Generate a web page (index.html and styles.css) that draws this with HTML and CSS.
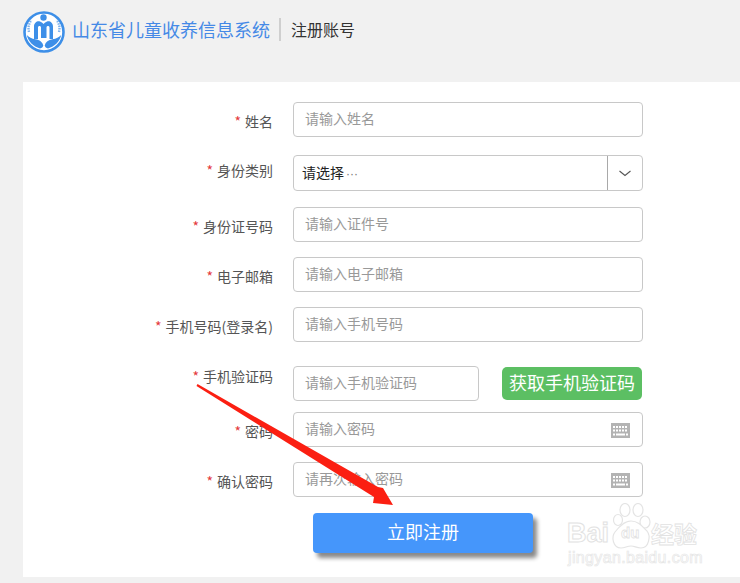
FILE: index.html
```html
<!DOCTYPE html>
<html lang="zh-CN">
<head>
<meta charset="utf-8">
<title>注册账号</title>
<link rel="stylesheet" href="styles.css">
</head>
<body>
<header class="top">
  <svg class="logo" width="42" height="42" viewBox="0 0 42 42" aria-hidden="true">
    <circle cx="21" cy="21" r="19.5" fill="#fff" stroke="#3d8fe8" stroke-width="2.600"/>
    <circle cx="20.500" cy="6.500" r="3.200" fill="#3d8fe8"/>
    <path d="M11 28V15.500C11 11.500 14.500 9.500 17 10.500c2 .8 3.500 2.500 3.500 2.500s1.500-1.700 3.500-2.500c2.500-1 6 1 6 5V28h-3.500V16.500c0-2-3-2-3 0V27h-5.500V16.500c0-2-3-2-3 0V28z" fill="#3d8fe8"/>
    <path d="M3.800 24C5 30.500 10.500 35.500 17 37.500c1.800-.3 3-1.500 3.300-3-.8-3.500-3.800-5.500-7.800-6.200-3.800-.6-6.500-2-8.700-4.300zM38.200 24C37 30.500 31.500 35.500 25 37.500c-1.800-.3-3-1.500-3.300-3 .8-3.500 3.800-5.500 7.800-6.200 3.800-.6 6.500-2 8.700-4.300z" fill="#3d8fe8"/>
    <path d="M6 21c-1.200-4.500-.2-8.500 2.500-12M36 21c1.200-4.500.2-8.500-2.500-12" fill="none" stroke="#7fb3ee" stroke-width="2.400" stroke-dasharray="1.500 1"/>
  </svg>
  <h1 class="sys-name">山东省儿童收养信息系统</h1>
  <span class="divider"></span>
  <span class="page-name">注册账号</span>
</header>

<main class="card">
  <form class="form">
    <div class="row row-name">
      <label class="label nudge-down"><i>*</i>姓名</label>
      <div class="field"><span class="ph">请输入姓名</span></div>
    </div>
    <div class="row row-type">
      <label class="label nudge-up"><i>*</i>身份类别</label>
      <div class="field select">
        <span class="sel-text">请选择<span class="dots">···</span></span>
        <span class="caret">
          <svg width="12" height="7" viewBox="0 0 12 7" aria-hidden="true"><path d="M.5 1 6 5.500 11.500 1" fill="none" stroke="#555" stroke-width="1.100"/></svg>
        </span>
      </div>
    </div>
    <div class="row row-id">
      <label class="label nudge-down"><i>*</i>身份证号码</label>
      <div class="field"><span class="ph">请输入证件号</span></div>
    </div>
    <div class="row row-std">
      <label class="label nudge-down"><i>*</i>电子邮箱</label>
      <div class="field"><span class="ph">请输入电子邮箱</span></div>
    </div>
    <div class="row row-std">
      <label class="label nudge-down"><i>*</i>手机号码(登录名)</label>
      <div class="field"><span class="ph">请输入手机号码</span></div>
    </div>
    <div class="row row-code">
      <label class="label nudge-far"><i>*</i>手机验证码</label>
      <div class="field short"><span class="ph">请输入手机验证码</span></div>
      <button type="button" class="sms">获取手机验证码</button>
    </div>
    <div class="row row-pw">
      <label class="label nudge-down"><i>*</i>密码</label>
      <div class="field"><span class="ph">请输入密码</span>
        <svg class="kbd" width="19" height="15" viewBox="0 0 19 15" aria-hidden="true">
          <rect width="19" height="15" fill="#b3b3b3"/>
          <path d="M2 4h15M2 7.500h15" stroke="#fff" stroke-width="2" stroke-dasharray="2 1"/>
          <path d="M5 11.500h9" stroke="#fff" stroke-width="2"/>
          <path d="M2 11.500h2M15 11.500h2" stroke="#fff" stroke-width="2"/>
        </svg>
      </div>
    </div>
    <div class="row row-std">
      <label class="label nudge-down"><i>*</i>确认密码</label>
      <div class="field"><span class="ph">请再次输入密码</span>
        <svg class="kbd" width="19" height="15" viewBox="0 0 19 15" aria-hidden="true">
          <rect width="19" height="15" fill="#b3b3b3"/>
          <path d="M2 4h15M2 7.500h15" stroke="#fff" stroke-width="2" stroke-dasharray="2 1"/>
          <path d="M5 11.500h9" stroke="#fff" stroke-width="2"/>
          <path d="M2 11.500h2M15 11.500h2" stroke="#fff" stroke-width="2"/>
        </svg>
      </div>
    </div>
    <button type="button" class="submit">立即注册</button>
  </form>
</main>

<svg class="arrow" width="740" height="583" viewBox="0 0 740 583" aria-hidden="true">
  <path d="M197.500 384 378 487 383 488 393 505 373 503 374 497 196.500 386Z" fill="#fb1f12"/>
</svg>

<div class="watermark" aria-hidden="true">
  <span class="wm-bai">Bai</span>
  <svg class="paw" width="62" height="56" viewBox="0 0 62 56">
    <g fill="#fff" stroke="#e4e4e4" stroke-width="1.200">
      <ellipse cx="32" cy="7" rx="5" ry="6.500"/>
      <ellipse cx="45" cy="7" rx="5" ry="6.500"/>
      <ellipse cx="52" cy="19" rx="5" ry="6"/>
      <ellipse cx="25" cy="17" rx="4.500" ry="5.500"/>
      <path d="M38 18c7 0 11 5 16 10 4 5 2 17-6 17-5 0-6-2-10-2s-6 2-10 2c-8 0-10-11-6-16 4-5 9-11 16-11z"/>
    </g>
  </svg>
  <span class="wm-du">du</span>
  <span class="wm-cn">经验</span>
  <span class="wm-url">jingyan.baidu.com</span>
</div>
</body>
</html>
```
FILE: styles.css
```css
* { box-sizing: border-box; }
html, body { margin: 0; padding: 0; }
body {
  position: relative;
  width: 740px;
  height: 583px;
  overflow: hidden;
  background: #f1f1f1;
  font-family: "Noto Sans CJK SC", "Noto Sans", sans-serif;
  font-size: 14px;
  color: #555;
}
.top {
  display: flex;
  align-items: center;
  height: 82px;
  padding: 0 0 24px 23px;
}
.logo { flex: none; margin-top: 6px; }
.sys-name {
  margin: 0 0 0 7px;
  font-size: 18px;
  font-weight: 400;
  line-height: 24px;
  color: #4589e6;
}
.divider {
  width: 2px;
  height: 23px;
  margin: 0 10px 0 9px;
  background: #cfcfcf;
}
.page-name {
  font-size: 16px;
  line-height: 24px;
  color: #333;
}
.card {
  width: 717px;
  height: 495px;
  margin-left: 23px;
  background: #fff;
  padding-top: 20px;
}
.form { display: flex; flex-direction: column; }
.row {
  display: flex;
  align-items: center;
  height: 35px;
}
.row-type { height: 36px; margin-top: 18px; }
.row-id { margin-top: 16px; }
.row-std { margin-top: 15px; }
.row-code { margin-top: 24px; }
.row-pw { margin-top: 11px; }
.label {
  width: 250px;
  flex: none;
  text-align: right;
  font-size: 14px;
  line-height: 20px;
  color: #555;
}
.label i {
  margin-right: 4px;
  font-style: normal;
  color: #e4393c;
}
.nudge-down { transform: translateY(1px); }
.nudge-up { transform: translateY(-3px); }
.nudge-far { transform: translateY(-8px); }
.field {
  display: flex;
  align-items: center;
  justify-content: space-between;
  width: 350px;
  height: 100%;
  margin-left: 20px;
  padding: 0 12px 0 11px;
  border: 1px solid #c8c8c8;
  border-radius: 4px;
  background: #fff;
}
.ph {
  margin-top: -4px;
  font-size: 14px;
  color: #999;
}
.short { width: 186px; }
.select { padding: 0; }
.sel-text {
  padding-left: 8px;
  margin-top: -2px;
  font-size: 14px;
  color: #222;
}
.dots { margin-left: 2px; color: #777; font: 12px "Liberation Sans", sans-serif; }
.caret {
  display: flex;
  align-items: center;
  justify-content: center;
  width: 35px;
  height: 100%;
  border-left: 1px solid #a9a9a9;
}
.kbd { margin-top: 1px; }
.sms {
  width: 140px;
  height: 33px;
  margin-left: 23px;
  padding: 0 0 3px;
  border: 0;
  border-radius: 5px;
  background: #5cbf63;
  color: #fff;
  font: inherit;
  font-size: 18px;
  line-height: 28px;
}
.submit {
  width: 220px;
  height: 40px;
  margin: 16px 0 0 290px;
  padding: 0 0 5px;
  border: 0;
  border-radius: 4px;
  background: #4596fb;
  color: #fff;
  font: inherit;
  font-size: 18px;
  box-shadow: 4px 5px 4px #8a8a8a;
}
.arrow { position: absolute; left: 0; top: 0; pointer-events: none; }
.watermark {
  position: absolute;
  left: 566px;
  top: 503px;
  width: 135px;
  height: 66px;
  color: transparent;
}
.paw { position: absolute; left: 27px; top: 0; }
.wm-bai {
  position: absolute;
  left: 1px;
  top: 13px;
  font: 700 27px/34px "Liberation Sans", sans-serif;
  -webkit-text-stroke: 1px #e2e2e2;
}
.wm-du {
  position: absolute;
  left: 55px;
  top: 21px;
  font: 700 15px/18px "Liberation Sans", sans-serif;
  -webkit-text-stroke: .8px #e2e2e2;
}
.wm-cn {
  position: absolute;
  left: 85px;
  top: 17px;
  font-size: 23px;
  line-height: 26px;
  font-weight: 700;
  -webkit-text-stroke: .8px #e2e2e2;
}
.wm-url {
  position: absolute;
  left: 2px;
  top: 45px;
  font: 16px/20px "Liberation Sans", sans-serif;
  letter-spacing: .35px;
  -webkit-text-stroke: .7px #e6e6e6;
}
```
